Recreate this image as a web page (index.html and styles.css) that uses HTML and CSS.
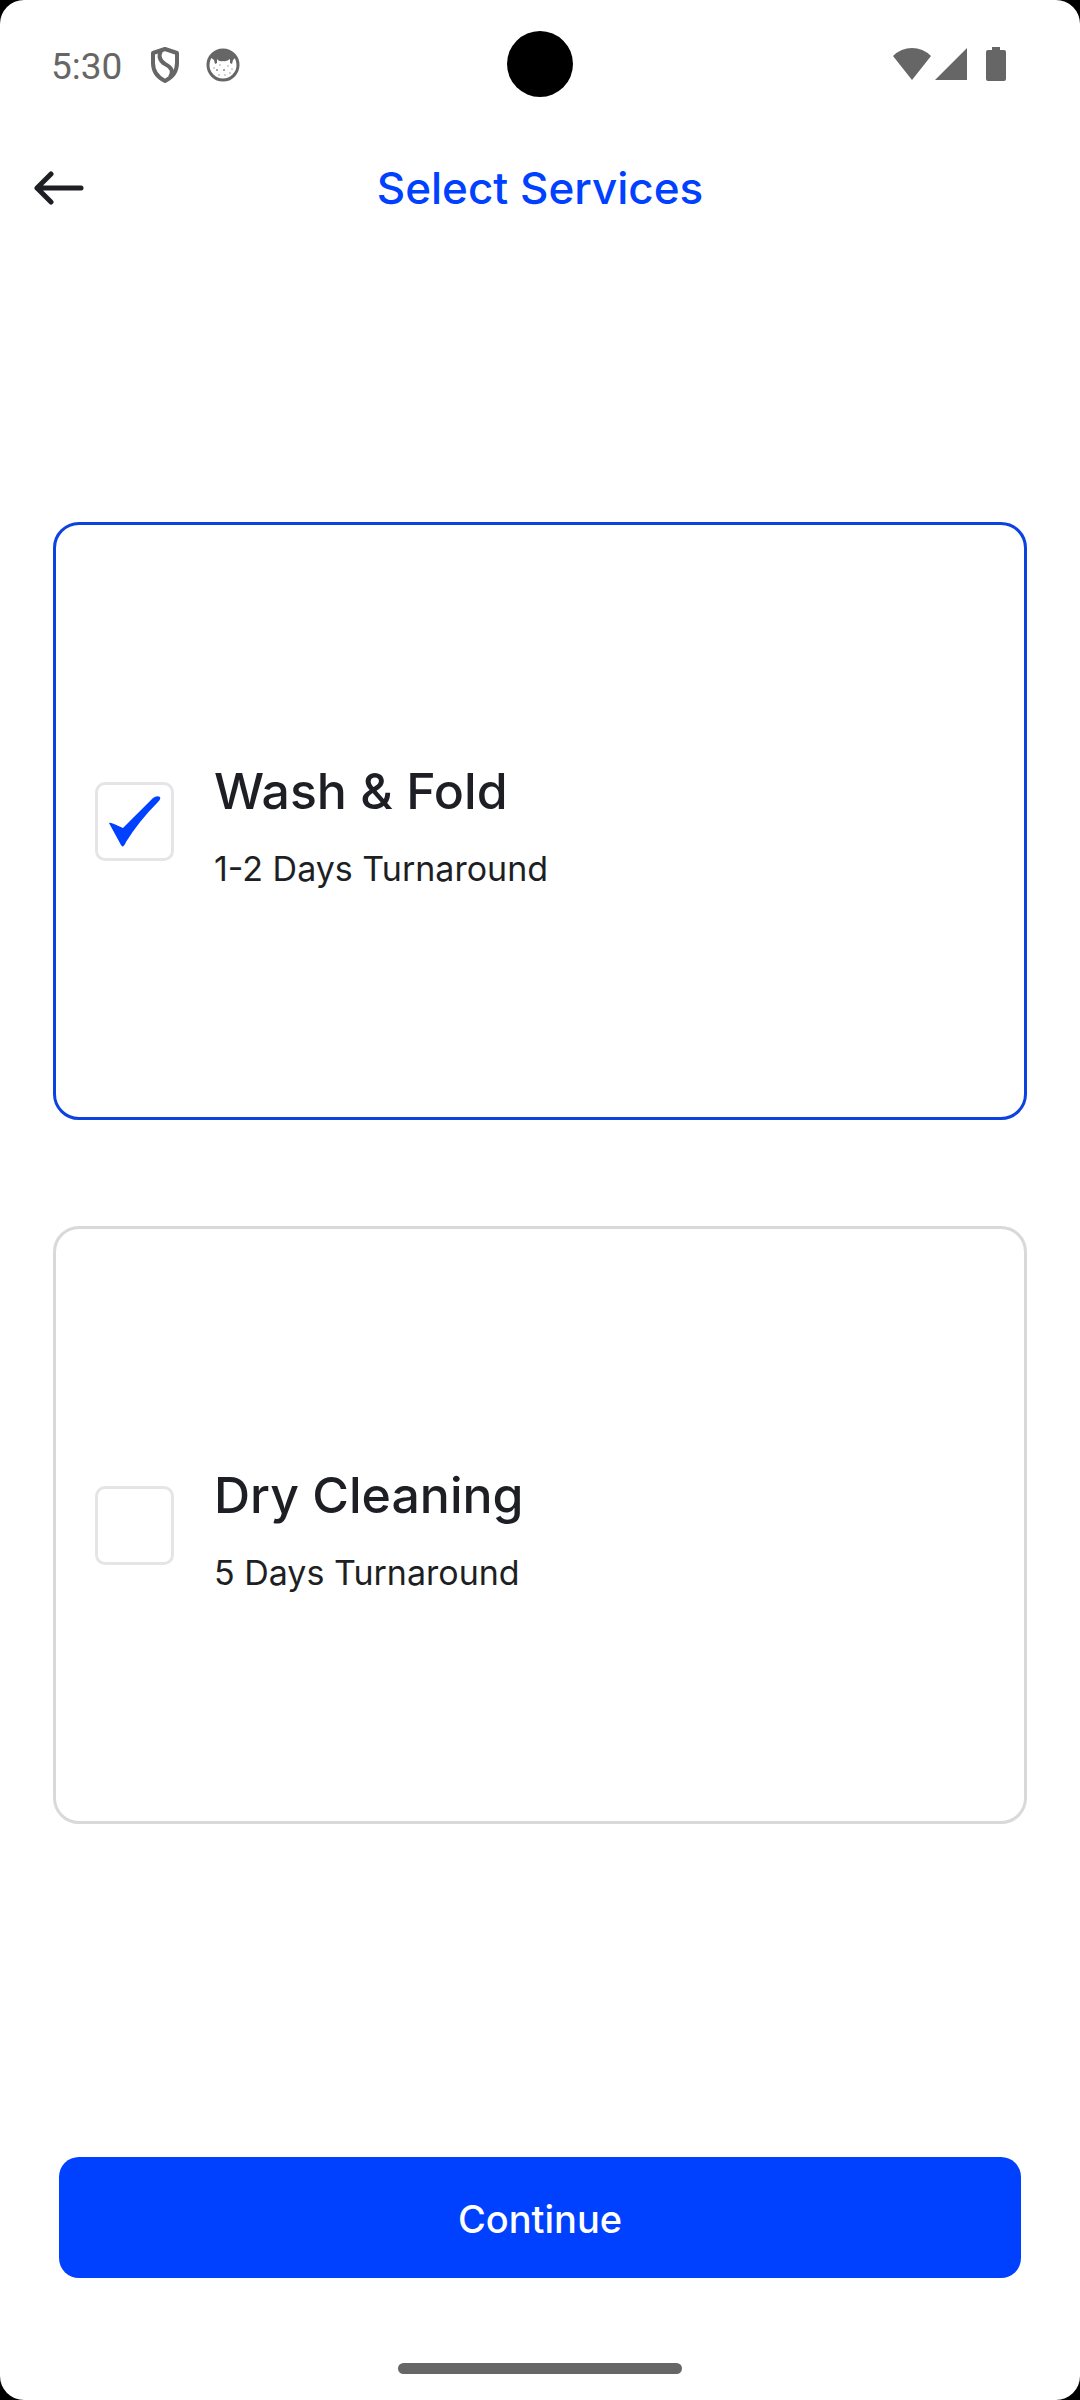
FILE: index.html
```html
<!DOCTYPE html>
<html lang="en">
<head>
  <meta charset="UTF-8">
  <meta name="viewport" content="width=device-width, initial-scale=1">
  <title>Select Services</title>
  <link rel="stylesheet" href="styles.css">
</head>
<body>
  <div class="screen">
    <div class="status-bar">
      <div class="status-left">
        <span class="time">5:30</span>
        <svg class="shield-icon" width="30" height="36" viewBox="0 0 30 36">
          <path d="M15 2 L27 6 V16 Q27 28 15 34 Q3 28 3 16 V6 Z" fill="none" stroke="#666" stroke-width="4" stroke-linejoin="round"/>
          <path d="M11 4 C8 9 10 14 15 17 C21 20 24 24 20 30" fill="none" stroke="#666" stroke-width="4"/>
        </svg>
        <svg class="face-icon" width="34" height="34" viewBox="0 0 34 34">
          <circle cx="17" cy="17" r="15" fill="#fff" stroke="#666" stroke-width="3"/>
          <path d="M4 9 Q9 2 17 2 Q25 2 30 9 L27 12 L26 16 L24 15 L24 11 Q20 14 17 13 Q13 14 11 11 L11 15 L9 16 L8 12 Z" fill="#666"/>
          <g fill="#888">
            <circle cx="8" cy="20" r="0.7"/>
            <circle cx="11" cy="22" r="1"/>
            <circle cx="14" cy="17" r="0.7"/>
            <circle cx="18" cy="22" r="1"/>
            <circle cx="22" cy="18" r="0.7"/>
            <circle cx="26" cy="21" r="0.7"/>
            <circle cx="19" cy="27" r="0.7"/>
            <circle cx="13" cy="27" r="0.7"/>
            <circle cx="24" cy="25" r="0.7"/>
          </g>
        </svg>
      </div>
      <div class="camera"></div>
      <div class="status-right">
        <svg width="38" height="34" viewBox="0 0 38 34">
          <path d="M0 9 Q8 1 19 1 Q30 1 38 9 L19 33 Z" fill="#666"/>
        </svg>
        <svg width="32" height="34" viewBox="0 0 32 34">
          <path d="M32 1 V33 H0 Z" fill="#666"/>
        </svg>
        <svg class="battery-icon" width="20" height="34" viewBox="0 0 20 34">
          <path d="M6 0 H14 V3 H18 Q20 3 20 5 V32 Q20 34 18 34 H2 Q0 34 0 32 V5 Q0 3 2 3 H6 Z" fill="#666"/>
        </svg>
      </div>
    </div>

    <header class="header">
      <button class="back" type="button" aria-label="Back">
        <svg width="50" height="34" viewBox="0 0 50 34">
          <path d="M47 17 H3 M17 3 L3 17 L17 31" fill="none" stroke="#1e1f24" stroke-width="5" stroke-linecap="round" stroke-linejoin="round"/>
        </svg>
      </button>
      <h1 class="title">Select Services</h1>
    </header>

    <main class="services">
      <label class="card">
        <span class="check">
          <input type="checkbox" name="service" value="wash" checked>
          <svg width="79" height="79" viewBox="0 0 79 79">
            <path d="M14 41 Q15 40 28 46 Q43 31 58 16 Q62 13 65 15 Q66 17 63 20 Q44 39 31 60 Q28 67 26 63 Q20 52 14 41 Z" fill="#0040ff"/>
          </svg>
        </span>
        <span class="info">
          <span class="name">Wash &amp; Fold</span>
          <span class="days">1-2 Days Turnaround</span>
        </span>
      </label>
      <label class="card">
        <span class="check">
          <input type="checkbox" name="service" value="dry">
          <svg width="79" height="79" viewBox="0 0 79 79">
            <path d="M14 41 Q15 40 28 46 Q43 31 58 16 Q62 13 65 15 Q66 17 63 20 Q44 39 31 60 Q28 67 26 63 Q20 52 14 41 Z" fill="#0040ff"/>
          </svg>
        </span>
        <span class="info">
          <span class="name">Dry Cleaning</span>
          <span class="days">5 Days Turnaround</span>
        </span>
      </label>
    </main>

    <footer class="footer">
      <button class="continue" type="button">Continue</button>
      <div class="home-bar"></div>
    </footer>
  </div>
</body>
</html>
```
FILE: styles.css
```css
* {
  box-sizing: border-box;
}

body {
  margin: 0;
  background-color: #000;
  color: #1e1f24;
  font-family: Inter, "Liberation Sans", sans-serif;
}

.screen {
  min-height: 100vh;
  display: flex;
  flex-direction: column;
  background-color: #fff;
  border-radius: 24px;
}

/* status bar */
.status-bar {
  display: grid;
  grid-template-columns: 1fr auto 1fr;
  align-items: center;
  height: 128px;
  padding: 0 74px 0 51px;
}

.status-left,
.status-right {
  display: flex;
  align-items: center;
}

.status-left {
  padding-top: 2px;
}

.status-right {
  justify-content: flex-end;
  gap: 4px;
}

.time {
  padding-top: 2px;
  color: #666;
  font-family: Roboto, sans-serif;
  font-size: 37px;
}

.shield-icon {
  margin-left: 28px;
}

.face-icon {
  margin-left: 26px;
}

.battery-icon {
  margin-left: 15px;
}

.camera {
  width: 66px;
  height: 66px;
  margin-left: 23px;
  border-radius: 50%;
  background-color: #000;
}

/* header */
.header {
  display: grid;
  grid-template-columns: 1fr auto 1fr;
  align-items: center;
  height: 120px;
  padding: 0 34px;
}

.back {
  justify-self: start;
  display: flex;
  padding: 0;
  border: none;
  background: none;
  cursor: pointer;
}

.title {
  margin: 0;
  color: #0040ff;
  font-size: 44px;
  font-weight: 500;
}

/* service cards */
.services {
  flex: 1;
  display: flex;
  flex-direction: column;
  gap: 106px;
  padding: 274px 53px;
}

.card {
  flex: 1;
  display: flex;
  align-items: center;
  gap: 40px;
  padding: 0 39px;
  border: 3px solid #d9d9d9;
  border-radius: 26px;
  cursor: pointer;
}

.card:has(input:checked) {
  border-color: #0b42e0;
}

.check {
  display: grid;
}

.check input,
.check svg {
  grid-area: 1 / 1;
}

.check input {
  appearance: none;
  width: 79px;
  height: 79px;
  margin: 0;
  border: 3px solid #e5e5e7;
  border-radius: 10px;
  cursor: pointer;
}

.check svg {
  visibility: hidden;
  pointer-events: none;
}

.check input:checked + svg {
  visibility: visible;
}

.info {
  display: flex;
  flex-direction: column;
  gap: 22px;
  padding-top: 10px;
}

.name {
  font-size: 50px;
  font-weight: 500;
  line-height: 64px;
}

.days {
  font-size: 34px;
  line-height: 48px;
}

/* bottom */
.footer {
  display: flex;
  flex-direction: column;
  align-items: center;
  gap: 85px;
  padding: 59px 59px 26px;
}

.continue {
  width: 100%;
  padding: 38px 36px 34px;
  border: none;
  border-radius: 20px;
  background-color: #0040ff;
  color: #fff;
  font-family: inherit;
  font-size: 38px;
  font-weight: 500;
  line-height: 49px;
  cursor: pointer;
}

.home-bar {
  width: 284px;
  height: 11px;
  border-radius: 6px;
  background-color: #666;
}
```
